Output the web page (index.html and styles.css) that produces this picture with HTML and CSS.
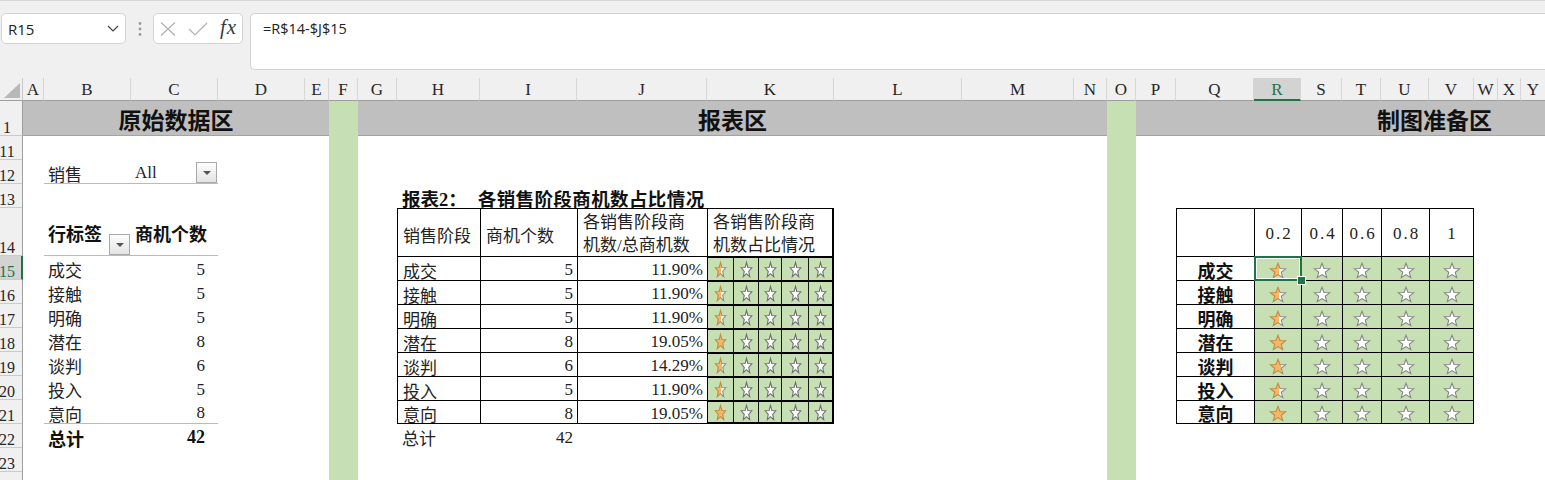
FILE: index.html
```html
<!DOCTYPE html>
<html lang="zh-CN">
<head>
<meta charset="utf-8">
<title>销售阶段商机数占比</title>
<link rel="stylesheet" href="styles.css">
</head>
<body>
<svg class="defs" width="0" height="0" aria-hidden="true">
  <defs>
    <path id="sp" vector-effect="non-scaling-stroke" d="M12 2 L14.65 8.86 L21.99 9.26 L16.28 13.89 L18.17 20.99 L12 17 L5.83 20.99 L7.72 13.89 L2.01 9.26 L9.35 8.86 Z"/>
    <linearGradient id="f60" x1="0" x2="1" y1="0" y2="0"><stop offset="0.56" stop-color="#f3b765"/><stop offset="0.56" stop-color="#ffffff"/></linearGradient>
    <linearGradient id="s60" x1="0" x2="1" y1="0" y2="0"><stop offset="0.56" stop-color="#c08a44"/><stop offset="0.56" stop-color="#8a8a8a"/></linearGradient>
    <linearGradient id="f71" x1="0" x2="1" y1="0" y2="0"><stop offset="0.68" stop-color="#f3b765"/><stop offset="0.68" stop-color="#ffffff"/></linearGradient>
    <linearGradient id="s71" x1="0" x2="1" y1="0" y2="0"><stop offset="0.68" stop-color="#c08a44"/><stop offset="0.68" stop-color="#8a8a8a"/></linearGradient>
    <linearGradient id="f95" x1="0" x2="1" y1="0" y2="0"><stop offset="0.95" stop-color="#f3b765"/><stop offset="0.95" stop-color="#ffffff"/></linearGradient>
    <linearGradient id="s95" x1="0" x2="1" y1="0" y2="0"><stop offset="0.95" stop-color="#c08a44"/><stop offset="0.95" stop-color="#c08a44"/></linearGradient>
  </defs>
</svg>

<div class="top">
  <div class="fbar">
    <div class="namebox">
      <span>R15</span>
      <svg class="chev" width="12" height="7" viewBox="0 0 12 7"><path d="M1 1 L6 6 L11 1" fill="none" stroke="#444" stroke-width="1.2"/></svg>
    </div>
    <div class="grip">
      <svg width="4" height="14" viewBox="0 0 4 14"><circle cx="2" cy="1.5" r="1.4" fill="#9a9a9a"/><circle cx="2" cy="7" r="1.4" fill="#9a9a9a"/><circle cx="2" cy="12.5" r="1.4" fill="#9a9a9a"/></svg>
    </div>
    <div class="fxbox">
      <svg class="xic" width="16" height="14" viewBox="0 0 16 14"><path d="M1 0.5 L15 13.5 M15 0.5 L1 13.5" stroke="#b0b0b0" stroke-width="1.2" fill="none"/></svg>
      <svg class="okic" width="20" height="14" viewBox="0 0 20 14"><path d="M1 7 L7 13 L19 1" stroke="#b0b0b0" stroke-width="1.2" fill="none"/></svg>
      <span class="fx">fx</span>
    </div>
    <div class="formula">=R$14-$J$15</div>
  </div>
</div>

<div class="sheet">
  <div class="corner"><svg width="22" height="22" viewBox="0 0 22 22"><polygon points="20,5 20,20 4,20" fill="#b8b8b8"/></svg></div>
  <div class="colheads">
    <div class="ch">A</div><div class="ch">B</div><div class="ch">C</div><div class="ch">D</div><div class="ch">E</div>
    <div class="ch">F</div><div class="ch">G</div><div class="ch">H</div><div class="ch">I</div><div class="ch">J</div>
    <div class="ch">K</div><div class="ch">L</div><div class="ch">M</div><div class="ch">N</div><div class="ch">O</div>
    <div class="ch">P</div><div class="ch">Q</div><div class="ch on">R</div><div class="ch">S</div><div class="ch">T</div>
    <div class="ch">U</div><div class="ch">V</div><div class="ch">W</div><div class="ch">X</div><div class="ch">Y</div>
  </div>
  <div class="rowheads">
    <div class="rh r1">1</div>
    <div class="rh">11</div>
    <div class="rh">12</div>
    <div class="rh">13</div>
    <div class="rh tall">14</div>
    <div class="rh on">15</div>
    <div class="rh">16</div>
    <div class="rh">17</div>
    <div class="rh">18</div>
    <div class="rh">19</div>
    <div class="rh">20</div>
    <div class="rh">21</div>
    <div class="rh">22</div>
    <div class="rh">23</div>
    <div class="rh"></div>
  </div>

  <div class="cells">
    <div class="band band-a">原始数据区</div>
    <div class="greencol gf"></div>
    <div class="band band-b">报表区</div>
    <div class="greencol go"></div>
    <div class="band band-c">制图准备区</div>

    <div class="pivot">
      <div class="prow bl">
        <div class="pc">销售</div>
        <div class="pc val"><span>All</span><span class="dd dd-top"></span></div>
      </div>
      <div class="prow"></div>
      <div class="prow tall bl">
        <div class="pc lab b"><span>行标签</span><span class="dd dd-bot"></span></div>
        <div class="pc b">商机个数</div>
      </div>
      <div class="prow"><div class="pc">成交</div><div class="pc num">5</div></div>
      <div class="prow"><div class="pc">接触</div><div class="pc num">5</div></div>
      <div class="prow"><div class="pc">明确</div><div class="pc num">5</div></div>
      <div class="prow"><div class="pc">潜在</div><div class="pc num">8</div></div>
      <div class="prow"><div class="pc">谈判</div><div class="pc num">6</div></div>
      <div class="prow"><div class="pc">投入</div><div class="pc num">5</div></div>
      <div class="prow bl"><div class="pc">意向</div><div class="pc num">8</div></div>
      <div class="prow"><div class="pc b">总计</div><div class="pc num b">42</div></div>
    </div>

    <div class="report">
      <div class="rtitle"><span>报表2：</span><span class="sub">各销售阶段商机数占比情况</span></div>

      <div class="rc t">销售阶段</div>
      <div class="rc t">商机个数</div>
      <div class="rc t wrap">各销售阶段商<br>机数/总商机数</div>
      <div class="rc t k wrap">各销售阶段商<br>机数占比情况</div>

      <div class="rc t">成交</div><div class="rc t num">5</div><div class="rc t num">11.90%</div>
      <div class="kst"><div class="sb"><svg class="st sm" viewBox="1.5 1.5 21 20" preserveAspectRatio="none"><use href="#sp" class="p60"/></svg></div><div class="sb"><svg class="st sm" viewBox="1.5 1.5 21 20" preserveAspectRatio="none"><use href="#sp" class="w"/></svg></div><div class="sb"><svg class="st sm" viewBox="1.5 1.5 21 20" preserveAspectRatio="none"><use href="#sp" class="w"/></svg></div><div class="sb"><svg class="st sm" viewBox="1.5 1.5 21 20" preserveAspectRatio="none"><use href="#sp" class="w"/></svg></div><div class="sb"><svg class="st sm" viewBox="1.5 1.5 21 20" preserveAspectRatio="none"><use href="#sp" class="w"/></svg></div></div>

      <div class="rc t">接触</div><div class="rc t num">5</div><div class="rc t num">11.90%</div>
      <div class="kst"><div class="sb"><svg class="st sm" viewBox="1.5 1.5 21 20" preserveAspectRatio="none"><use href="#sp" class="p60"/></svg></div><div class="sb"><svg class="st sm" viewBox="1.5 1.5 21 20" preserveAspectRatio="none"><use href="#sp" class="w"/></svg></div><div class="sb"><svg class="st sm" viewBox="1.5 1.5 21 20" preserveAspectRatio="none"><use href="#sp" class="w"/></svg></div><div class="sb"><svg class="st sm" viewBox="1.5 1.5 21 20" preserveAspectRatio="none"><use href="#sp" class="w"/></svg></div><div class="sb"><svg class="st sm" viewBox="1.5 1.5 21 20" preserveAspectRatio="none"><use href="#sp" class="w"/></svg></div></div>

      <div class="rc t">明确</div><div class="rc t num">5</div><div class="rc t num">11.90%</div>
      <div class="kst"><div class="sb"><svg class="st sm" viewBox="1.5 1.5 21 20" preserveAspectRatio="none"><use href="#sp" class="p60"/></svg></div><div class="sb"><svg class="st sm" viewBox="1.5 1.5 21 20" preserveAspectRatio="none"><use href="#sp" class="w"/></svg></div><div class="sb"><svg class="st sm" viewBox="1.5 1.5 21 20" preserveAspectRatio="none"><use href="#sp" class="w"/></svg></div><div class="sb"><svg class="st sm" viewBox="1.5 1.5 21 20" preserveAspectRatio="none"><use href="#sp" class="w"/></svg></div><div class="sb"><svg class="st sm" viewBox="1.5 1.5 21 20" preserveAspectRatio="none"><use href="#sp" class="w"/></svg></div></div>

      <div class="rc t">潜在</div><div class="rc t num">8</div><div class="rc t num">19.05%</div>
      <div class="kst"><div class="sb"><svg class="st sm" viewBox="1.5 1.5 21 20" preserveAspectRatio="none"><use href="#sp" class="p95"/></svg></div><div class="sb"><svg class="st sm" viewBox="1.5 1.5 21 20" preserveAspectRatio="none"><use href="#sp" class="w"/></svg></div><div class="sb"><svg class="st sm" viewBox="1.5 1.5 21 20" preserveAspectRatio="none"><use href="#sp" class="w"/></svg></div><div class="sb"><svg class="st sm" viewBox="1.5 1.5 21 20" preserveAspectRatio="none"><use href="#sp" class="w"/></svg></div><div class="sb"><svg class="st sm" viewBox="1.5 1.5 21 20" preserveAspectRatio="none"><use href="#sp" class="w"/></svg></div></div>

      <div class="rc t">谈判</div><div class="rc t num">6</div><div class="rc t num">14.29%</div>
      <div class="kst"><div class="sb"><svg class="st sm" viewBox="1.5 1.5 21 20" preserveAspectRatio="none"><use href="#sp" class="p71"/></svg></div><div class="sb"><svg class="st sm" viewBox="1.5 1.5 21 20" preserveAspectRatio="none"><use href="#sp" class="w"/></svg></div><div class="sb"><svg class="st sm" viewBox="1.5 1.5 21 20" preserveAspectRatio="none"><use href="#sp" class="w"/></svg></div><div class="sb"><svg class="st sm" viewBox="1.5 1.5 21 20" preserveAspectRatio="none"><use href="#sp" class="w"/></svg></div><div class="sb"><svg class="st sm" viewBox="1.5 1.5 21 20" preserveAspectRatio="none"><use href="#sp" class="w"/></svg></div></div>

      <div class="rc t">投入</div><div class="rc t num">5</div><div class="rc t num">11.90%</div>
      <div class="kst"><div class="sb"><svg class="st sm" viewBox="1.5 1.5 21 20" preserveAspectRatio="none"><use href="#sp" class="p60"/></svg></div><div class="sb"><svg class="st sm" viewBox="1.5 1.5 21 20" preserveAspectRatio="none"><use href="#sp" class="w"/></svg></div><div class="sb"><svg class="st sm" viewBox="1.5 1.5 21 20" preserveAspectRatio="none"><use href="#sp" class="w"/></svg></div><div class="sb"><svg class="st sm" viewBox="1.5 1.5 21 20" preserveAspectRatio="none"><use href="#sp" class="w"/></svg></div><div class="sb"><svg class="st sm" viewBox="1.5 1.5 21 20" preserveAspectRatio="none"><use href="#sp" class="w"/></svg></div></div>

      <div class="rc t lb">意向</div><div class="rc t num lb">8</div><div class="rc t num lb">19.05%</div>
      <div class="kst lb"><div class="sb"><svg class="st sm" viewBox="1.5 1.5 21 20" preserveAspectRatio="none"><use href="#sp" class="p95"/></svg></div><div class="sb"><svg class="st sm" viewBox="1.5 1.5 21 20" preserveAspectRatio="none"><use href="#sp" class="w"/></svg></div><div class="sb"><svg class="st sm" viewBox="1.5 1.5 21 20" preserveAspectRatio="none"><use href="#sp" class="w"/></svg></div><div class="sb"><svg class="st sm" viewBox="1.5 1.5 21 20" preserveAspectRatio="none"><use href="#sp" class="w"/></svg></div><div class="sb"><svg class="st sm" viewBox="1.5 1.5 21 20" preserveAspectRatio="none"><use href="#sp" class="w"/></svg></div></div>

      <div class="rc">总计</div><div class="rc num">42</div>
    </div>

    <div class="chart">
      <div class="cc"></div>
      <div class="cc hd">0.2</div><div class="cc hd">0.4</div><div class="cc hd">0.6</div><div class="cc hd">0.8</div><div class="cc hd">1</div>

      <div class="cc lbl">成交</div>
      <div class="cc g sel"><svg class="st lg" viewBox="1.5 1.5 21 20" preserveAspectRatio="none"><use href="#sp" class="p60"/></svg></div>
      <div class="cc g"><svg class="st lg" viewBox="1.5 1.5 21 20" preserveAspectRatio="none"><use href="#sp" class="w"/></svg></div>
      <div class="cc g"><svg class="st lg" viewBox="1.5 1.5 21 20" preserveAspectRatio="none"><use href="#sp" class="w"/></svg></div>
      <div class="cc g"><svg class="st lg" viewBox="1.5 1.5 21 20" preserveAspectRatio="none"><use href="#sp" class="w"/></svg></div>
      <div class="cc g"><svg class="st lg" viewBox="1.5 1.5 21 20" preserveAspectRatio="none"><use href="#sp" class="w"/></svg></div>

      <div class="cc lbl">接触</div>
      <div class="cc g"><svg class="st lg" viewBox="1.5 1.5 21 20" preserveAspectRatio="none"><use href="#sp" class="p60"/></svg></div>
      <div class="cc g"><svg class="st lg" viewBox="1.5 1.5 21 20" preserveAspectRatio="none"><use href="#sp" class="w"/></svg></div>
      <div class="cc g"><svg class="st lg" viewBox="1.5 1.5 21 20" preserveAspectRatio="none"><use href="#sp" class="w"/></svg></div>
      <div class="cc g"><svg class="st lg" viewBox="1.5 1.5 21 20" preserveAspectRatio="none"><use href="#sp" class="w"/></svg></div>
      <div class="cc g"><svg class="st lg" viewBox="1.5 1.5 21 20" preserveAspectRatio="none"><use href="#sp" class="w"/></svg></div>

      <div class="cc lbl">明确</div>
      <div class="cc g"><svg class="st lg" viewBox="1.5 1.5 21 20" preserveAspectRatio="none"><use href="#sp" class="p60"/></svg></div>
      <div class="cc g"><svg class="st lg" viewBox="1.5 1.5 21 20" preserveAspectRatio="none"><use href="#sp" class="w"/></svg></div>
      <div class="cc g"><svg class="st lg" viewBox="1.5 1.5 21 20" preserveAspectRatio="none"><use href="#sp" class="w"/></svg></div>
      <div class="cc g"><svg class="st lg" viewBox="1.5 1.5 21 20" preserveAspectRatio="none"><use href="#sp" class="w"/></svg></div>
      <div class="cc g"><svg class="st lg" viewBox="1.5 1.5 21 20" preserveAspectRatio="none"><use href="#sp" class="w"/></svg></div>

      <div class="cc lbl">潜在</div>
      <div class="cc g"><svg class="st lg" viewBox="1.5 1.5 21 20" preserveAspectRatio="none"><use href="#sp" class="p95"/></svg></div>
      <div class="cc g"><svg class="st lg" viewBox="1.5 1.5 21 20" preserveAspectRatio="none"><use href="#sp" class="w"/></svg></div>
      <div class="cc g"><svg class="st lg" viewBox="1.5 1.5 21 20" preserveAspectRatio="none"><use href="#sp" class="w"/></svg></div>
      <div class="cc g"><svg class="st lg" viewBox="1.5 1.5 21 20" preserveAspectRatio="none"><use href="#sp" class="w"/></svg></div>
      <div class="cc g"><svg class="st lg" viewBox="1.5 1.5 21 20" preserveAspectRatio="none"><use href="#sp" class="w"/></svg></div>

      <div class="cc lbl">谈判</div>
      <div class="cc g"><svg class="st lg" viewBox="1.5 1.5 21 20" preserveAspectRatio="none"><use href="#sp" class="p71"/></svg></div>
      <div class="cc g"><svg class="st lg" viewBox="1.5 1.5 21 20" preserveAspectRatio="none"><use href="#sp" class="w"/></svg></div>
      <div class="cc g"><svg class="st lg" viewBox="1.5 1.5 21 20" preserveAspectRatio="none"><use href="#sp" class="w"/></svg></div>
      <div class="cc g"><svg class="st lg" viewBox="1.5 1.5 21 20" preserveAspectRatio="none"><use href="#sp" class="w"/></svg></div>
      <div class="cc g"><svg class="st lg" viewBox="1.5 1.5 21 20" preserveAspectRatio="none"><use href="#sp" class="w"/></svg></div>

      <div class="cc lbl">投入</div>
      <div class="cc g"><svg class="st lg" viewBox="1.5 1.5 21 20" preserveAspectRatio="none"><use href="#sp" class="p60"/></svg></div>
      <div class="cc g"><svg class="st lg" viewBox="1.5 1.5 21 20" preserveAspectRatio="none"><use href="#sp" class="w"/></svg></div>
      <div class="cc g"><svg class="st lg" viewBox="1.5 1.5 21 20" preserveAspectRatio="none"><use href="#sp" class="w"/></svg></div>
      <div class="cc g"><svg class="st lg" viewBox="1.5 1.5 21 20" preserveAspectRatio="none"><use href="#sp" class="w"/></svg></div>
      <div class="cc g"><svg class="st lg" viewBox="1.5 1.5 21 20" preserveAspectRatio="none"><use href="#sp" class="w"/></svg></div>

      <div class="cc lbl">意向</div>
      <div class="cc g"><svg class="st lg" viewBox="1.5 1.5 21 20" preserveAspectRatio="none"><use href="#sp" class="p95"/></svg></div>
      <div class="cc g"><svg class="st lg" viewBox="1.5 1.5 21 20" preserveAspectRatio="none"><use href="#sp" class="w"/></svg></div>
      <div class="cc g"><svg class="st lg" viewBox="1.5 1.5 21 20" preserveAspectRatio="none"><use href="#sp" class="w"/></svg></div>
      <div class="cc g"><svg class="st lg" viewBox="1.5 1.5 21 20" preserveAspectRatio="none"><use href="#sp" class="w"/></svg></div>
      <div class="cc g"><svg class="st lg" viewBox="1.5 1.5 21 20" preserveAspectRatio="none"><use href="#sp" class="w"/></svg></div>
    </div>
  </div>
</div>
</body>
</html>
```

FILE: styles.css
```css
:root {
  --cols: 21px 87px 87px 87px 24px 29px 39px 83px 97px 130px 127px 128px 112px 33px 29px 40px 78px 47px 41px 39px 48px 45px 24px 23px 24px;
  --green: #c6e0b4;
  --xl: #217346;
}

* { box-sizing: border-box; }

html, body { margin: 0; padding: 0; }

body {
  width: 1545px;
  height: 480px;
  overflow: hidden;
  background: #ffffff;
  font-family: "Liberation Serif", "Noto Sans CJK SC", serif;
  color: #1e1e1e;
  position: relative;
}

.defs { position: absolute; width: 0; height: 0; overflow: hidden; }

/* ---------- formula bar ---------- */
.top {
  height: 78px;
  background: #f0f0f0;
  border-top: 1px solid #d6d6d6;
  padding-top: 12px;
}

.fbar { display: flex; align-items: flex-start; }

.namebox {
  flex: none;
  margin-left: 1px;
  width: 125px;
  height: 31px;
  background: #fff;
  border: 1px solid #d3d3d3;
  border-radius: 5px;
  display: flex;
  align-items: center;
  justify-content: space-between;
  padding: 0 6px 0 6px;
  font: 15px "Open Sans", "Liberation Sans", sans-serif;
  color: #222;
}

.grip {
  flex: none;
  width: 27px;
  height: 31px;
  display: flex;
  align-items: center;
  justify-content: center;
}

.fxbox {
  flex: none;
  width: 90px;
  height: 31px;
  background: #fff;
  border: 1px solid #d3d3d3;
  border-radius: 5px;
  display: flex;
  align-items: center;
  padding-left: 6px;
  gap: 12px;
}
.fxbox svg { flex: none; }

.fx {
  font: italic 21px "Liberation Serif", serif;
  color: #3c3c3c;
  letter-spacing: 1px;
  margin-top: -2px;
}

.formula {
  flex: 1 1 auto;
  margin-left: 7px;
  height: 57px;
  background: #fff;
  border: 1px solid #d3d3d3;
  border-right: none;
  border-radius: 5px 0 0 5px;
  padding: 5px 12px;
  font: 14.5px/20px "Open Sans", "Liberation Sans", sans-serif;
  color: #222;
}

/* ---------- sheet frame ---------- */
.sheet {
  display: grid;
  grid-template-columns: 23px max-content;
  grid-template-rows: 23px max-content;
}

.corner {
  background: #f0f0f0;
  border-right: 1px solid #c8c8c8;
  border-bottom: 1px solid #9e9e9e;
}
.corner svg { display: block; }

.colheads {
  display: grid;
  grid-template-columns: var(--cols);
  background: #f0f0f0;
}

.ch {
  height: 23px;
  border-right: 1px solid #d6d6d6;
  border-bottom: 1px solid #9e9e9e;
  text-align: center;
  font-size: 17px;
  line-height: 20px;
  padding-top: 2px;
  color: #262626;
}
.ch:last-child { border-right: none; }
.ch.on {
  background: #d3d3d3;
  color: var(--xl);
  border-bottom: 2px solid var(--xl);
}

.rowheads {
  display: flex;
  flex-direction: column;
  background: #f0f0f0;
}

.rh {
  flex: none;
  height: 24px;
  border-right: 1px solid #9e9e9e;
  border-bottom: 1px solid #cacaca;
  display: flex;
  align-items: flex-end;
  justify-content: center;
  padding-right: 8px;
  font-size: 16px;
  line-height: 14px;
  color: #262626;
}
.rh.r1 { height: 35px; }
.rh.tall { height: 48px; }
.rh.on {
  background: #d3d3d3;
  color: var(--xl);
  border-right: 2px solid var(--xl);
  padding-right: 7px;
}

.cells {
  display: grid;
  grid-template-columns: var(--cols);
  grid-template-rows: 35px 24px 24px 24px 48px repeat(10, 24px);
  background: #fff;
}

/* ---------- row 1 bands ---------- */
.band {
  grid-row: 1;
  background: #bfbfbf;
  border-bottom: 1px solid #a3a3a3;
  display: flex;
  align-items: center;
  justify-content: center;
  padding-top: 1px;
  font-weight: 700;
  font-size: 23px;
  color: #111;
  white-space: nowrap;
}
.band-a { grid-column: 1 / 6; }
.band-b { grid-column: 7 / 15; }
.band-c { grid-column: 16 / 26; justify-content: flex-start; padding-left: 241px; }

.greencol { background: var(--green); grid-row: 1 / -1; }
.gf { grid-column: 6; }
.go { grid-column: 15; }

/* ---------- pivot ---------- */
.pivot {
  grid-column: 2 / 4;
  grid-row: 3 / 14;
  display: flex;
  flex-direction: column;
}

.prow { display: flex; flex: none; height: 24px; }
.prow.tall { height: 48px; }
.prow.bl { border-bottom: 1px solid #9bc2e6; }

.pc {
  width: 87px;
  display: flex;
  align-items: center;
  padding: 3px 0 0 4px;
  font-size: 17px;
  white-space: nowrap;
  color: #222;
}
.pc.num { justify-content: flex-end; padding-right: 13px; }
.pc.val { justify-content: space-between; padding-right: 1px; }
.pc.lab { justify-content: space-between; padding-right: 1px; }

.b { font-weight: 700; font-size: 18px; color: #111; }

.dd {
  flex: none;
  width: 21px;
  height: 21px;
  border: 1px solid #a9a9a9;
  background: linear-gradient(#fdfdfd, #e3e3e3);
  display: flex;
  align-items: center;
  justify-content: center;
}
.dd::after {
  content: "";
  border-left: 4px solid transparent;
  border-right: 4px solid transparent;
  border-top: 4px solid #555;
}
.dd-top { align-self: flex-start; margin-top: -1px; }
.dd-bot { align-self: flex-end; }

/* ---------- report table ---------- */
.report {
  grid-column: 8 / 12;
  grid-row: 4 / 14;
  display: grid;
  grid-template-columns: 83px 97px 130px 127px;
  grid-template-rows: 24px 48px repeat(8, 24px);
}

.rtitle {
  grid-column: 1 / -1;
  display: flex;
  align-items: center;
  padding: 3px 0 0 5px;
  font-weight: 700;
  font-size: 18.5px;
  white-space: nowrap;
  color: #111;
}
.rtitle .sub { margin-left: 11px; letter-spacing: 0.4px; }

.rc {
  display: flex;
  align-items: center;
  padding: 3px 4px 0 5px;
  font-size: 17px;
  white-space: nowrap;
  color: #222;
}
.rc.num { justify-content: flex-end; }
.t { border-left: 1px solid #000; border-top: 1px solid #000; }
.rc.k { border-right: 2px solid #000; }
.lb { border-bottom: 1px solid #000; }
.wrap { white-space: normal; line-height: 23px; }

.kst {
  display: grid;
  grid-template-columns: 25px 25px 23px 27px 1fr;
  border-left: 1px solid #000;
  border-top: 2px solid #000;
  border-right: 2px solid #000;
  background: var(--green);
}
.kst.lb { border-bottom: 2px solid #000; }
.sb { display: flex; align-items: center; justify-content: center; }
.sb + .sb { border-left: 1px solid #1a1a1a; }

/* ---------- stars ---------- */
.st { display: block; overflow: visible; }
.st.sm { width: 11px; height: 15px; }
.st.lg { width: 16px; height: 15px; }
.w { fill: #ffffff; stroke: #858585; stroke-width: 1.1; }
.sm .w { stroke: #6f6f6f; }
.p60 { fill: url(#f60); stroke: url(#s60); stroke-width: 1.1; }
.p71 { fill: url(#f71); stroke: url(#s71); stroke-width: 1.1; }
.p95 { fill: url(#f95); stroke: url(#s95); stroke-width: 1.1; }

/* ---------- chart prep table ---------- */
.chart {
  grid-column: 17 / 23;
  grid-row: 5 / 13;
  display: grid;
  grid-template-columns: 78px 47px 41px 39px 48px 45px;
  grid-template-rows: 48px repeat(7, 24px);
}

.cc {
  display: flex;
  align-items: center;
  justify-content: center;
  border-left: 1px solid #000;
  border-top: 1px solid #000;
  font-size: 17px;
  color: #222;
}
.chart > .cc:nth-child(6n) { border-right: 1px solid #000; }
.chart > .cc:nth-last-child(-n+6) { border-bottom: 1px solid #000; }

.cc.hd { padding: 3px 0 0 2px; letter-spacing: 2px; }
.cc.lbl { font-weight: 700; font-size: 18px; padding-top: 2px; color: #111; }
.cc.g { background: var(--green); padding-top: 3px; }

.sel { position: relative; z-index: 1; }
.sel::after {
  content: "";
  position: absolute;
  left: -1px;
  top: -1px;
  right: -1px;
  bottom: -1px;
  border: 2px solid var(--xl);
  box-shadow: inset 0 0 0 1px #fff;
}
.sel::before {
  content: "";
  position: absolute;
  right: -5px;
  bottom: -5px;
  width: 7px;
  height: 7px;
  background: var(--xl);
  border: 1px solid #fff;
  z-index: 2;
}
```
